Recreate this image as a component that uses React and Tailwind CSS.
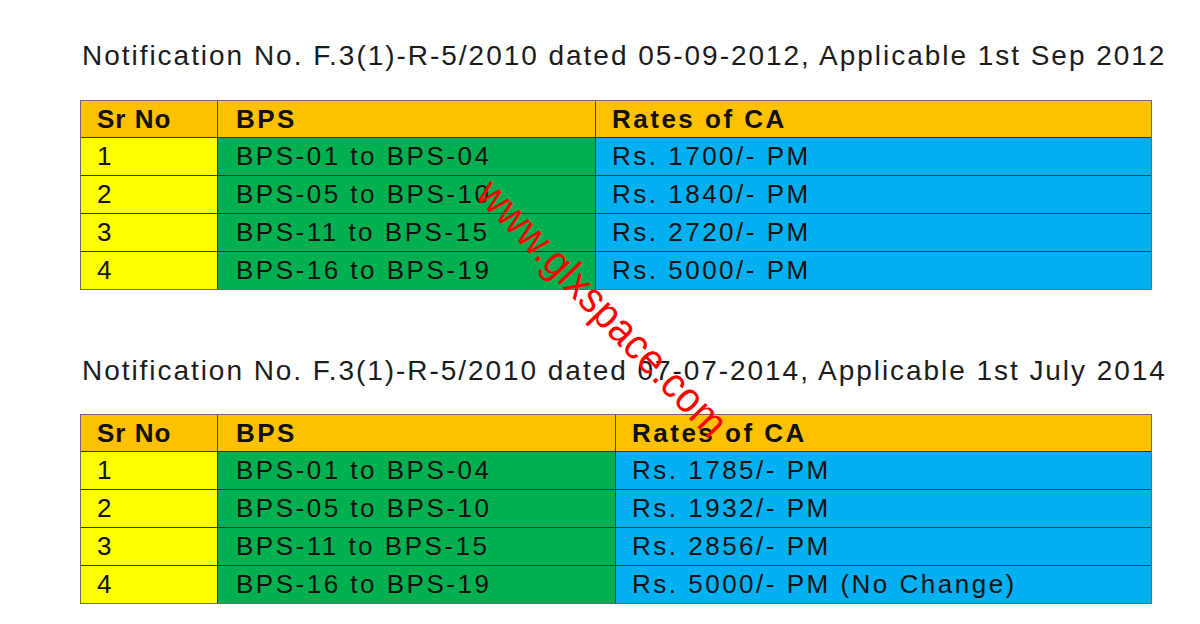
import React from 'react'

const first = [
  ['1', 'BPS-01 to BPS-04', 'Rs. 1700/- PM'],
  ['2', 'BPS-05 to BPS-10', 'Rs. 1840/- PM'],
  ['3', 'BPS-11 to BPS-15', 'Rs. 2720/- PM'],
  ['4', 'BPS-16 to BPS-19', 'Rs. 5000/- PM'],
]

const second = [
  ['1', 'BPS-01 to BPS-04', 'Rs. 1785/- PM'],
  ['2', 'BPS-05 to BPS-10', 'Rs. 1932/- PM'],
  ['3', 'BPS-11 to BPS-15', 'Rs. 2856/- PM'],
  ['4', 'BPS-16 to BPS-19', 'Rs. 5000/- PM (No Change)'],
]

const RateTable = ({ rows, cols }) => {
  return (
    <div className={`grid ${cols} w-[1072px] border border-[#6b6b6b] text-[26px] tracking-[2.5px] text-[#111]`}>
      <div className="h-[36px] flex items-center pl-[16px] bg-[#ffc000] font-bold tracking-[1px] border-r border-[#444]">Sr No</div>
      <div className="h-[36px] flex items-center pl-[18px] bg-[#ffc000] font-bold border-r border-[#444]">BPS</div>
      <div className="h-[36px] flex items-center pl-[16px] bg-[#ffc000] font-bold">Rates of CA</div>
      {rows.map((r) => (
        <React.Fragment key={r[0]}>
          <div className="h-[38px] flex items-center pl-[16px] bg-[#ffff00] border-t border-r border-[#333]">{r[0]}</div>
          <div className="h-[38px] flex items-center pl-[18px] bg-[#00b050] border-t border-r border-[#333]">{r[1]}</div>
          <div className="h-[38px] flex items-center pl-[16px] bg-[#00b0f0] border-t border-[#333]">{r[2]}</div>
        </React.Fragment>
      ))}
    </div>
  )
}

export default function App() {
  return (
    <div className="relative w-[1200px] h-[624px] bg-white overflow-hidden font-['Liberation_Sans',Arial,sans-serif]">
      <div className="flex flex-col pl-[80px]">
        <div className="pt-[38px] pl-[2px] h-[100px] text-[28px] leading-[36px] tracking-[1.97px] text-[#1c1c1c] whitespace-nowrap">
          Notification No. F.3(1)-R-5/2010 dated 05-09-2012, Applicable 1st Sep 2012
        </div>
        <RateTable rows={first} cols="grid-cols-[137px_378px_1fr]" />
        <div className="pt-[63px] pl-[2px] h-[124px] text-[28px] leading-[36px] tracking-[1.95px] text-[#1c1c1c] whitespace-nowrap">
          Notification No. F.3(1)-R-5/2010 dated 07-07-2014, Applicable 1st July 2014
        </div>
        <RateTable rows={second} cols="grid-cols-[137px_398px_1fr]" />
      </div>

      {/* watermark */}
      <div className="absolute left-[603px] top-[308px] -translate-x-1/2 -translate-y-1/2 rotate-[46deg] whitespace-nowrap text-[39px] leading-none text-[#ff0000] tracking-[0.5px] scale-y-[1.1]">
        www.glxspace.com
      </div>
    </div>
  )
}
